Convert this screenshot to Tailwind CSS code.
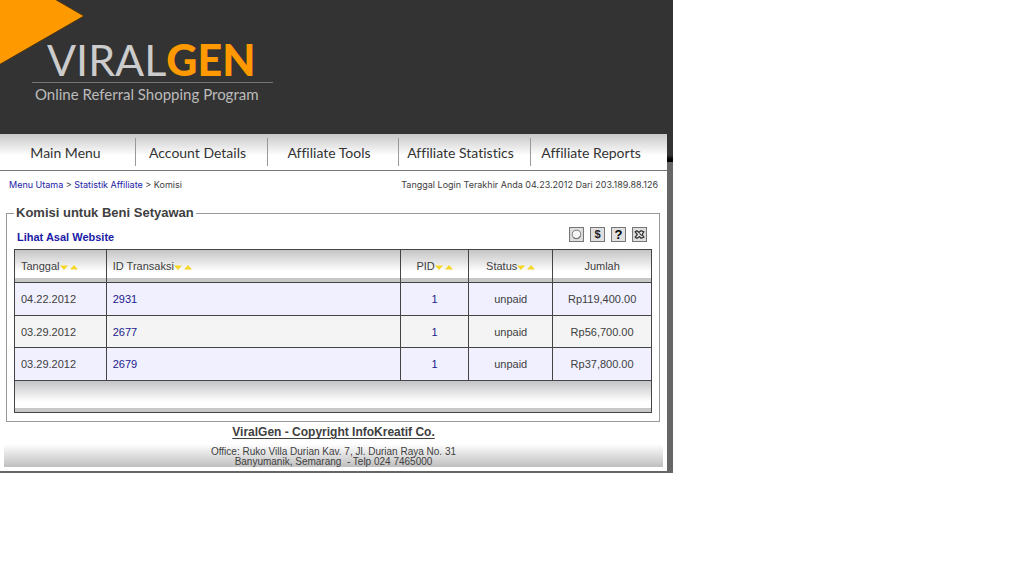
<!DOCTYPE html>
<html lang="id">
<head>
<meta charset="utf-8">
<title>ViralGen - Komisi</title>
<script src="https://cdn.jsdelivr.net/npm/@tailwindcss/browser@4"></script>
</head>
<body class="bg-white font-['Liberation_Sans',Arial,sans-serif] text-[#404040]">
<svg class="hidden">
  <symbol id="sort-down" viewBox="0 0 8 5"><path d="M0 0.5h8L4 5z" fill="#f7d728"/></symbol>
  <symbol id="sort-up" viewBox="0 0 8 5"><path d="M0 4.5h8L4 0z" fill="#f7d728"/></symbol>
</svg>
<div class="w-full max-w-[673px] border-b-2 border-[#666]">
  <header class="relative overflow-hidden bg-[#333] pt-[37px] pb-[29px] pl-8">
    <svg class="absolute top-0 left-0" width="86" height="66" viewBox="0 0 86 66"><path d="M-2 -2H53L84 16L-2 65.500z" fill="#ff9900" stroke="#4d3512" stroke-width="1"/></svg>
    <div class="relative w-[241px]">
      <h1 class="border-b border-[#777] pl-[15px] font-[Lato,sans-serif] text-[43px] leading-[45px] font-normal whitespace-nowrap text-[#ccc]">VIRAL<b class="font-black text-[#ff9900]">GEN</b></h1>
      <p class="pl-[3px] font-[Lato,sans-serif] text-[15px] leading-[22px] whitespace-nowrap text-[#bbb] [font-variant-ligatures:none]">Online Referral Shopping Program</p>
    </div>
  </header>

  <div class="flex">
    <div class="min-w-0 flex-1">
      <nav class="grid grid-cols-[136fr_132fr_131fr_132fr_136fr] border-b border-[#777] bg-linear-to-b from-[#c8c8c8] to-white to-60% py-1 text-center font-[Lato,sans-serif] text-[14px] leading-[27px] whitespace-nowrap text-[#333] [font-variant-ligatures:none] *:pt-px">
        <a href="#" class="border-r border-[#999] pr-1">Main Menu</a>
        <a href="#" class="border-r border-[#999] pr-2">Account Details</a>
        <a href="#" class="border-r border-[#999] pr-2">Affiliate Tools</a>
        <a href="#" class="border-r border-[#999] pr-2">Affiliate Statistics</a>
        <a href="#" class="pr-4">Affiliate Reports</a>
      </nav>

      <div class="flex justify-between px-[9px] pt-2 font-[Inter,sans-serif] text-[9px] leading-3">
        <div><a href="#" class="text-[#1a1aa6]">Menu Utama</a> &gt; <a href="#" class="text-[#1a1aa6]">Statistik Affiliate</a> &gt; Komisi</div>
        <div>Tanggal Login Terakhir Anda 04.23.2012 Dari 203.189.88.126</div>
      </div>

      <fieldset class="mr-[7px] ml-1.5 mt-[14px] border border-[#999] px-[7px] pb-2">
        <legend class="px-0.5 text-[13px] leading-4 font-bold">Komisi untuk Beni Setyawan</legend>
        <div class="flex items-center justify-between pt-1.5 pr-[5px] pb-1 pl-[3px]">
          <a href="#" class="pt-[3px] text-[11px] leading-[15px] font-bold text-[#1a1aa6]">Lihat Asal Website</a>
          <div class="flex gap-1.5 pb-[3px]">
            <button type="button" aria-label="Status" class="size-[15px]"><svg class="block size-full" viewBox="0 0 14 14"><path d="M.5.5h13v13H.5z" fill="#e0e0e0" stroke="#777"/><circle cx="7" cy="7" r="4" fill="#f7f7f7" stroke="#888"/><path d="M4 9.500a4 4 0 0 0 6.500-1" fill="none" stroke="#777"/></svg></button>
            <button type="button" class="size-[15px] border border-[#777] bg-[#e0e0e0] text-[11px] leading-[13px] font-bold text-[#222]">$</button>
            <button type="button" class="size-[15px] border border-[#777] bg-[#e0e0e0] text-[13px] leading-[13px] font-black text-black">?</button>
            <button type="button" aria-label="Kelola" class="size-[15px]"><svg class="block size-full" viewBox="0 0 14 14"><path d="M.5.5h13v13H.5z" fill="#e0e0e0" stroke="#777"/><path d="M3 4.500L4.500 3.500 6.500 5 8.500 3.500 11 4.500 9.500 7 11 9.500 8.500 10.500 7 9 4.500 10.500 3 9.500 5 7z" fill="#eee" stroke="#333" stroke-width="1.200"/><path d="M7 6l2 2" stroke="#333"/></svg></button>
          </div>
        </div>
        <table class="w-full table-fixed border-collapse border border-[#444] text-center text-[11px] leading-4">
          <colgroup><col class="w-[14.400%]"><col class="w-[46.200%]"><col class="w-[10.700%]"><col class="w-[13.200%]"><col class="w-[15.500%]"></colgroup>
          <thead>
            <tr class="h-[33px] bg-[linear-gradient(to_bottom,#c4c4c4,#fff_65%,#fff_84%,#c8c8c8_84%)] *:border *:border-[#444] *:font-normal *:whitespace-nowrap">
              <th class="px-1.5 text-left">Tanggal<button type="button" aria-label="Urutkan turun"><svg class="inline h-[5px] w-2"><use href="#sort-down"/></svg></button><button type="button" aria-label="Urutkan naik" class="ml-0.5"><svg class="inline h-[5px] w-2"><use href="#sort-up"/></svg></button></th>
              <th class="px-1.5 text-left">ID Transaksi<button type="button" aria-label="Urutkan turun"><svg class="inline h-[5px] w-2"><use href="#sort-down"/></svg></button><button type="button" aria-label="Urutkan naik" class="ml-0.5"><svg class="inline h-[5px] w-2"><use href="#sort-up"/></svg></button></th>
              <th>PID<button type="button" aria-label="Urutkan turun"><svg class="inline h-[5px] w-2"><use href="#sort-down"/></svg></button><button type="button" aria-label="Urutkan naik" class="ml-0.5"><svg class="inline h-[5px] w-2"><use href="#sort-up"/></svg></button></th>
              <th>Status<button type="button" aria-label="Urutkan turun"><svg class="inline h-[5px] w-2"><use href="#sort-down"/></svg></button><button type="button" aria-label="Urutkan naik" class="ml-0.5"><svg class="inline h-[5px] w-2"><use href="#sort-up"/></svg></button></th>
              <th>Jumlah</th>
            </tr>
          </thead>
          <tbody>
            <tr class="h-[33px] bg-[#f0f0ff] *:border *:border-[#444]"><td class="px-1.5 text-left">04.22.2012</td><td class="px-1.5 text-left"><a href="#" class="text-[#1a1a8c]">2931</a></td><td><a href="#" class="text-[#1a1a8c]">1</a></td><td>unpaid</td><td>Rp119,400.00</td></tr>
            <tr class="h-8 bg-[#f4f4f4] *:border *:border-[#444]"><td class="px-1.5 text-left">03.29.2012</td><td class="px-1.5 text-left"><a href="#" class="text-[#1a1a8c]">2677</a></td><td><a href="#" class="text-[#1a1a8c]">1</a></td><td>unpaid</td><td>Rp56,700.00</td></tr>
            <tr class="h-[33px] bg-[#f0f0ff] *:border *:border-[#444]"><td class="px-1.5 text-left">03.29.2012</td><td class="px-1.5 text-left"><a href="#" class="text-[#1a1a8c]">2679</a></td><td><a href="#" class="text-[#1a1a8c]">1</a></td><td>unpaid</td><td>Rp37,800.00</td></tr>
          </tbody>
          <tfoot>
            <tr class="h-8 bg-[linear-gradient(to_bottom,#c4c4c8,#fff_65%,#fff_84%,#c8c8c8_84%)]"><td colspan="5" class="border border-[#444]"></td></tr>
          </tfoot>
        </table>
      </fieldset>

      <footer class="flex flex-col items-center px-1 pt-0.5 pb-1 text-center">
        <a href="#" class="text-[12px] leading-4 font-bold underline underline-offset-2">ViralGen - Copyright InfoKreatif Co.</a>
        <address class="mt-1 w-full bg-linear-to-b from-white to-[#bfbfbf] pt-[3px] text-[10px] leading-[10px] not-italic">Office: Ruko Villa Durian Kav. 7, Jl. Durian Raya No. 31<br>Banyumanik, Semarang &nbsp;- Telp 024 7465000</address>
      </footer>
    </div>
    <div class="flex w-1.5 flex-col bg-[#666]"><div class="h-7 bg-linear-to-b from-[#333] from-75% to-black"></div></div>
  </div>
</div>
</body>
</html>
